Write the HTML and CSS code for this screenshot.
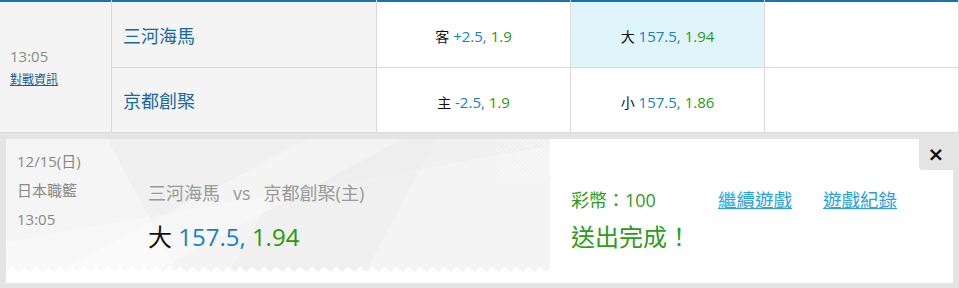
FILE: index.html
```html
<!DOCTYPE html>
<html lang="zh-Hant">
<head>
  <meta charset="UTF-8">
  <meta name="viewport" content="width=device-width, initial-scale=1.0">
  <title>投注單</title>
  <link rel="stylesheet" href="styles.css">
</head>
<body>
  <div class="board">
    <div class="cell cell-time top">
      <span class="kickoff">13:05</span>
      <a class="match-info" href="#">對戰資訊</a>
    </div>
    <div class="cell cell-team top">三河海馬</div>
    <div class="cell cell-odds top">
      <span class="side">客</span>&nbsp;<span class="line">+2.5,</span>&nbsp;<span class="price">1.9</span>
    </div>
    <div class="cell cell-odds top picked">
      <span class="side">大</span>&nbsp;<span class="line">157.5,</span>&nbsp;<span class="price">1.94</span>
    </div>
    <div class="cell top"></div>

    <div class="cell cell-team">京都創棸</div>
    <div class="cell cell-odds">
      <span class="side">主</span>&nbsp;<span class="line">-2.5,</span>&nbsp;<span class="price">1.9</span>
    </div>
    <div class="cell cell-odds">
      <span class="side">小</span>&nbsp;<span class="line">157.5,</span>&nbsp;<span class="price">1.86</span>
    </div>
    <div class="cell"></div>
  </div>

  <div class="slip-wrap">
    <div class="slip">
      <div class="slip-ticket">
        <div class="slip-info">
          <div>12/15(日)</div>
          <div>日本職籃</div>
          <div>13:05</div>
        </div>
        <div class="slip-match">
          <div class="matchup">三河海馬<span class="vs">vs</span>京都創棸(主)</div>
          <div class="bet">
            <span class="side">大</span>&nbsp;<span class="line">157.5,</span>&nbsp;<span class="price">1.94</span>
          </div>
        </div>
      </div>

      <div class="slip-result">
        <div class="result-row">
          <span class="coins">彩幣：100</span>
          <a class="result-link" href="#">繼續遊戲</a>
          <a class="result-link" href="#">遊戲紀錄</a>
        </div>
        <div class="done">送出完成！</div>
      </div>

      <button class="close-btn">×</button>
    </div>
  </div>
</body>
</html>
```

FILE: styles.css
```css
body {
  margin: 0;
  padding: 0;
  font-family: "Open Sans", "Noto Sans CJK TC", sans-serif;
  background-color: #e4e4e4;
}

.board {
  display: grid;
  grid-template-columns: 111px 264px 193px 193px 193px;
  grid-template-rows: 67px 64px;
  gap: 1px;
  padding: 0 1px 1px 0;
  background: #d9d9d9;
}

.cell {
  background: #fff;
  box-sizing: border-box;
}

.top {
  border-top: 2px solid #1873b4;
}

.cell-time {
  grid-row: span 2;
  background: #f4f4f4;
  display: flex;
  flex-direction: column;
  align-items: flex-start;
  padding: 44px 0 0 10px;
}

.kickoff {
  font-size: 15px;
  line-height: 20px;
  color: #8a8a8a;
}

.match-info {
  margin-top: 5px;
  font-size: 12px;
  line-height: 18px;
  color: #1b5e8e;
}

.cell-team {
  background: #f4f4f4;
  display: flex;
  align-items: center;
  padding-left: 11px;
  font-size: 18px;
  color: #1a68a0;
}

.cell-odds {
  display: flex;
  align-items: center;
  justify-content: center;
  padding-top: 3px;
  font-size: 15px;
}

.cell-odds .side {
  font-size: 14px;
}

.picked {
  background: #e0f4fc;
}

.side {
  color: #111;
}

.line {
  color: #1a80c6;
}

.price {
  color: #2a9a0a;
}

.slip-wrap {
  padding: 6px 6px 5px 6px;
}

.slip {
  position: relative;
  display: flex;
  height: 144px;
  background: #fff;
}

.slip-ticket {
  position: relative;
  display: flex;
  width: 544px;
  height: 133px;
  box-sizing: border-box;
  padding: 8px 0 0 11px;
  background:
    repeating-linear-gradient(45deg, rgba(255,255,255,.35) 0 1px, transparent 1px 3px) 490px 0 / 54px 40px no-repeat,
    linear-gradient(62deg, rgba(255,255,255,.35) 0 28%, transparent 28%),
    linear-gradient(-28deg, transparent 0 50%, rgba(255,255,255,.3) 50% 62%, transparent 62%),
    linear-gradient(118deg, transparent 0 48%, rgba(236,236,236,.5) 48% 70%, transparent 70%),
    linear-gradient(170deg, #f0f0f0 0 45%, #f4f4f4 45%);
}

.slip-ticket::after {
  content: "";
  position: absolute;
  left: 0;
  right: 0;
  bottom: 0;
  height: 6px;
  background: conic-gradient(from 135deg at 50% 0, #fff 90deg, transparent 0) 0 0 / 12px 6px repeat-x;
}

.slip-info {
  width: 131px;
  font-size: 15px;
  line-height: 29px;
  color: #888;
}

.slip-match {
  padding-top: 33px;
}

.matchup {
  font-size: 18px;
  line-height: 26px;
  color: #999;
}

.vs {
  margin: 0 13px;
}

.bet {
  margin-top: 16px;
  font-size: 24px;
  line-height: 30px;
}

.slip-result {
  padding: 49px 0 0 21px;
}

.result-row {
  display: flex;
  align-items: center;
  line-height: 24px;
}

.coins {
  width: 147px;
  font-size: 18px;
  color: #2e9b1c;
}

.result-link {
  margin-right: 31px;
  font-size: 18.5px;
  color: #2aa1dc;
}

.done {
  margin-top: 10px;
  font-size: 24px;
  line-height: 30px;
  color: #2e9b1c;
}

.close-btn {
  position: absolute;
  top: 0;
  right: 0;
  width: 34px;
  height: 31px;
  padding: 0;
  border: none;
  border-bottom-left-radius: 4px;
  background: #e4e4e4;
  font-family: "DejaVu Sans", sans-serif;
  font-size: 20px;
  font-weight: bold;
  line-height: 31px;
  color: #111;
  cursor: pointer;
}
```
